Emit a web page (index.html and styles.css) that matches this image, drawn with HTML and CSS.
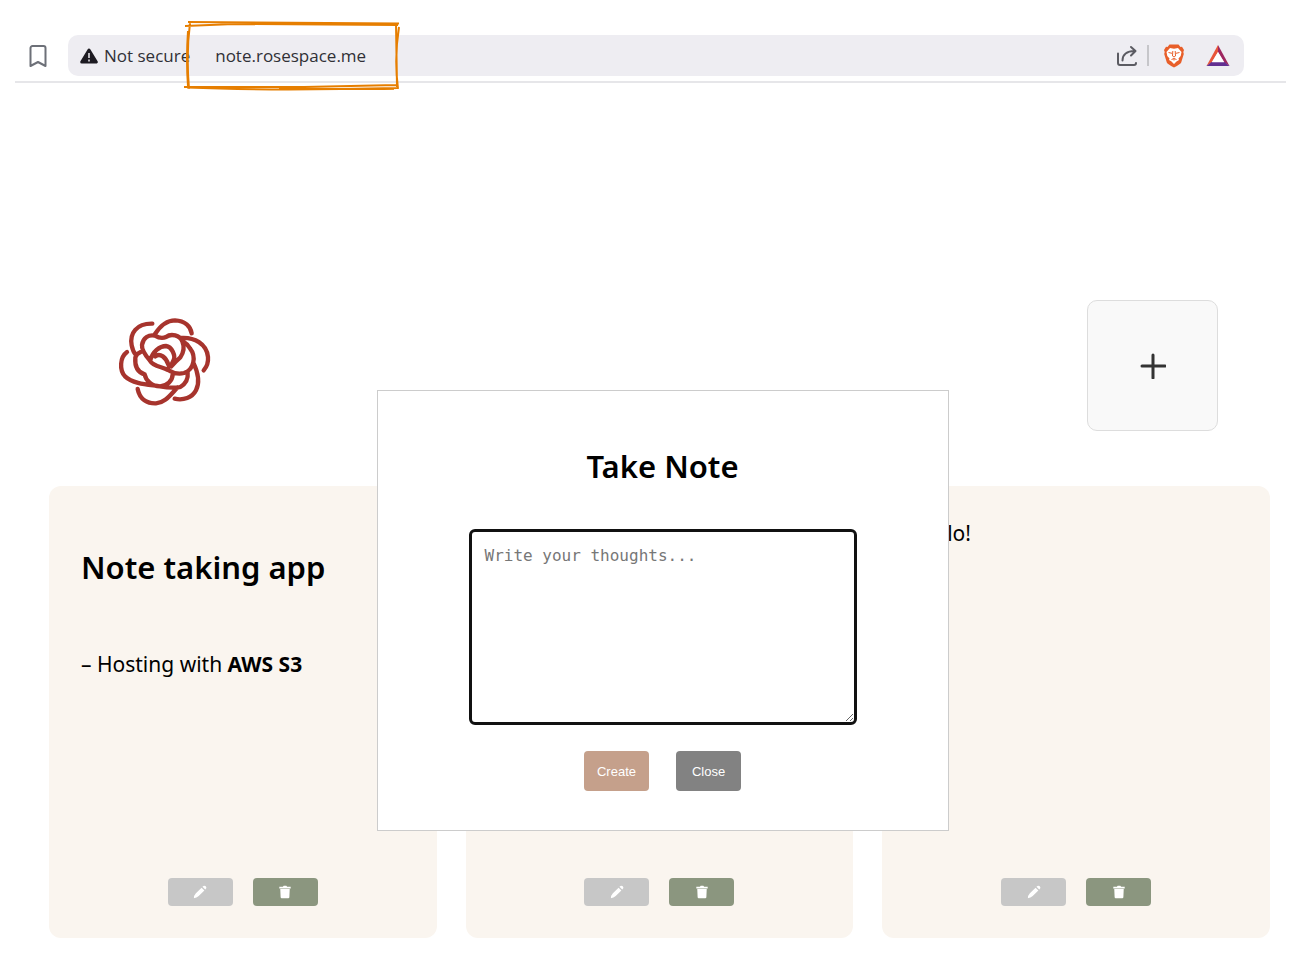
FILE: index.html
```html
<!DOCTYPE html>
<html lang="en">
<head>
<meta charset="utf-8">
<meta name="viewport" content="width=device-width, initial-scale=1">
<title>Rose Notes</title>
<link rel="stylesheet" href="styles.css">
</head>
<body>
<svg class="defs" aria-hidden="true">
  <symbol id="pencil" viewBox="0 0 16 16"><path d="M9.800 3 13 6.200 6.500 12.700Q4 15 1 15 1 12 3.300 9.500ZM10.800 2 12 1Q13.200.3 14.600 1.500 15.800 2.900 15 4.100L14 5.200Z"/></symbol>
  <symbol id="trash" viewBox="0 0 16 16"><path d="M1.500 2h4L6.500.800h3l1 1.200h4v1.900h-13ZM2.600 4.600h10.800L13 14q-.1 1.200-1.300 1.200H4.300Q3.100 15.200 3 14Z"/></symbol>
</svg>
<header class="toolbar">
  <button class="bookmark" aria-label="Bookmark"><svg width="18" height="24" viewBox="0 0 18 24"><path d="M1.500 4a2 2 0 0 1 2-2h11a2 2 0 0 1 2 2v18L9 18l-7.500 4Z"/></svg></button>
  <div class="address">
    <svg width="18" height="18" viewBox="0 0 18 18"><path d="M9 3 16.300 15H1.700Z" fill="#1d1b22" stroke="#1d1b22" stroke-width="3" stroke-linejoin="round"/><path d="M9 6v5M9 12.500v2" stroke="#eeedf2" stroke-width="1.500"/></svg>
    <span class="secure">Not secure</span>
    <span class="url">note.rosespace.me</span>
    <div class="tools">
      <button aria-label="Share"><svg class="line" width="22" height="22" viewBox="0 0 22 22"><path d="M2 8.500v9.500a2 2 0 0 0 2 2h14a2 2 0 0 0 2-2M6.500 15.500C6.500 9.500 11 6 18.500 6M15 2l4.500 4-4.500 4.500"/></svg></button>
      <span class="divider"></span>
      <button aria-label="Brave Shields"><svg width="22" height="24" viewBox="0 0 22 24"><path fill="#e85f2a" d="M6.500.5h9L17.500 3l1.500-.2 2 3.200-.7 2 .5 2-2.600 8.500Q17.500 20 11 23.500 4.500 20 3.800 18.500L1.200 10l.5-2L1 6l2-3.200L4.500 3Z"/><path fill="#fff" d="m7 4 4 .8L15 4l3.500 4-.8 4-2.200 2.500.5 1.500-2.500 1.500L11 20l-2.500-2.500L6 16l.5-1.500L4.300 12l-.8-4Z"/><path fill="none" stroke="#e85f2a" d="m5.500 8.500 3.500.8M16.500 8.500l-3.500.8M9.800 7 9.500 12l1.500 1 1.500-1L12.200 7M8.500 15.500l2.500-1 2.500 1M11 14.500v2"/></svg></button>
      <button aria-label="Rewards"><svg width="24" height="22" viewBox="0 0 24 22"><path fill="#e9553a" d="M12 0v7L5.500 17.500.5 21Z"/><path fill="#9e2760" d="M12 0v7l6.500 10.500 5 3.500Z"/><path fill="#622f91" d="M.5 21 5.500 17h13l5 4Z"/><path fill="#fff" d="m12 7 6 10.200H6Z"/></svg></button>
    </div>
  </div>
  <svg class="marker" width="220" height="74" viewBox="0 0 220 74" aria-hidden="true"><path d="M4 4 215 5.500M1 8 50 6 214 7M6 5Q2 35 5 71M4 13Q2 42 4 68M212 6 213 69M215 9Q210 40 214 71M0 69 120 69 213 67M3 69.500Q85 73 214 70M95 71 210 71"/></svg>
</header>
<main class="app">
  <div class="top">
    <svg class="rose" width="110" height="105" viewBox="0 0 330 315" role="img" aria-label="Rose">
      <path d="M127 41C80 40 58 70 65 106Q69 125 77 134M135 72C153 44 173 31 195 31 225 32 242 49 245 70M51 126C29 142 28 180 45 199 70 223 120 224 150 229Q182 235 206 232M83 237C89 268 112 281 138 280 165 278 180 256 202 233M212 84C253 81 290 101 294 141Q296 164 281 181M250 158C264 187 271 215 258 241 247 263 220 272 194 266M92 126Q78 132 76 143C74 168 82 187 104 193 107 211 126 229 150 229 171 228 188 212 188 193M120 152Q94 122 96 105C99 82 117 73 135 77Q153 88 168 81C184 69 209 76 217 94 224 111 219 130 211 142Q197 154 184 169M120 152C128 125 149 108 168 108 186 110 197 138 191 150Q187 163 177 171M136 139C150 127 169 143 175 164M120 152C129 169 155 170 174 180Q199 195 222 189C253 179 259 139 240 115Q231 101 220 95M233 188Q236 215 211 231"/>
    </svg>
    <button class="add" aria-label="Add note"><svg width="26" height="26" viewBox="0 0 26 26"><path d="M13 2v23M2 13h23"/></svg></button>
  </div>
  <section class="notes">
    <article class="card">
      <div class="body"><h2>Note taking app</h2><p>– Hosting with <b>AWS S3</b></p></div>
      <div class="actions"><button class="edit" aria-label="Edit"><svg><use href="#pencil"/></svg></button><button class="delete" aria-label="Delete"><svg><use href="#trash"/></svg></button></div>
    </article>
    <article class="card">
      <div class="body"></div>
      <div class="actions"><button class="edit" aria-label="Edit"><svg><use href="#pencil"/></svg></button><button class="delete" aria-label="Delete"><svg><use href="#trash"/></svg></button></div>
    </article>
    <article class="card">
      <div class="body"><p>Hello!</p></div>
      <div class="actions"><button class="edit" aria-label="Edit"><svg><use href="#pencil"/></svg></button><button class="delete" aria-label="Delete"><svg><use href="#trash"/></svg></button></div>
    </article>
  </section>
</main>
<form class="modal" role="dialog" aria-labelledby="title">
  <h2 id="title">Take Note</h2>
  <textarea aria-labelledby="title" placeholder="Write your thoughts..."></textarea>
  <div class="choices"><button type="button" class="create">Create</button><button type="button" class="close">Close</button></div>
</form>
</body>
</html>
```
FILE: styles.css
```css
* { box-sizing: border-box; }
body { margin: 0; background: #fff; color: #000; font-family: "Noto Sans", "Open Sans", sans-serif; position: relative; }
button { border: 0; padding: 0; background: none; font-family: "Liberation Sans", Arial, sans-serif; cursor: pointer; }
svg { display: block; flex: none; }
h2, p { margin: 0; }
h2 { font-size: 31px; line-height: 44px; font-weight: 600; }
.defs { position: absolute; width: 0; height: 0; }

.toolbar { position: relative; display: flex; align-items: center; gap: 21px; margin: 0 28px 0 15px; padding: 35px 42px 5px 14px; border-bottom: 2px solid #e6e6e9; }
.bookmark path { fill: none; stroke: #6d7078; stroke-width: 2; stroke-linejoin: round; }
.address { flex: 1; display: flex; align-items: center; height: 41px; padding: 0 14px 0 12px; border-radius: 10px; background: #eeedf2; color: #303036; font: 17px "Open Sans", sans-serif; }
.secure { margin: 0 25px 0 6px; }
.tools { display: flex; align-items: center; margin-left: auto; }
.line { fill: none; stroke: #5b5b62; stroke-width: 2; stroke-linecap: round; stroke-linejoin: round; }
.divider { width: 2px; height: 21px; margin: 0 14px 0 9px; background: #c6c6ca; }
.tools button + button { margin-left: 21px; }
.marker { position: absolute; left: 169px; top: 18px; fill: none; stroke: #e67e00; stroke-width: 2; }

.app { padding: 217px 44px 35px 49px; }
.top { display: flex; justify-content: space-between; align-items: flex-start; padding: 0 52px 0 61px; margin-bottom: 55px; }
.rose { margin-top: 10px; fill: none; stroke: #a7342d; stroke-width: 13; stroke-linecap: round; stroke-linejoin: round; }
.add { display: grid; place-items: center; width: 131px; height: 131px; border: 1px solid #ddd; border-radius: 10px; background: #f9f9f9; }
.add path { stroke: #333; stroke-width: 3; stroke-linecap: round; }

.notes { display: grid; grid-template-columns: repeat(3, minmax(0, 1fr)); gap: 29px; }
.card { display: flex; flex-direction: column; min-height: 452px; padding: 32px; border-radius: 12px; background: #faf5ef; }
.body { flex: 1; font-size: 21px; line-height: 31px; }
.body h2 { margin: 27px 0 60px; }
.actions { display: flex; justify-content: center; gap: 20px; }
.actions button { display: grid; place-items: center; width: 65px; height: 28px; border-radius: 4px; }
.actions svg { width: 14px; height: 14px; fill: #fff; }
.edit { background: #c7c7c7; }
.delete { background: #8b967f; }

.modal { position: absolute; top: 390px; left: 11px; right: 0; width: 572px; margin: 0 auto; padding: 53px 91px 39px; display: flex; flex-direction: column; align-items: center; border: 1px solid #ccc; background: #fff; }
.modal textarea { width: 100%; height: 196px; margin: 41px 0 26px; padding: 13px; border: 3px solid #111; border-radius: 6px; outline: 0; font: 16px/22px "DejaVu Sans Mono", monospace; resize: both; }
.modal textarea::placeholder { color: #777; }
.choices { display: flex; gap: 27px; }
.choices button { width: 65px; height: 40px; border-radius: 4px; color: #fff; font-size: 13px; }
.create { background: #c5a08b; }
.close { background: #828282; }
```
